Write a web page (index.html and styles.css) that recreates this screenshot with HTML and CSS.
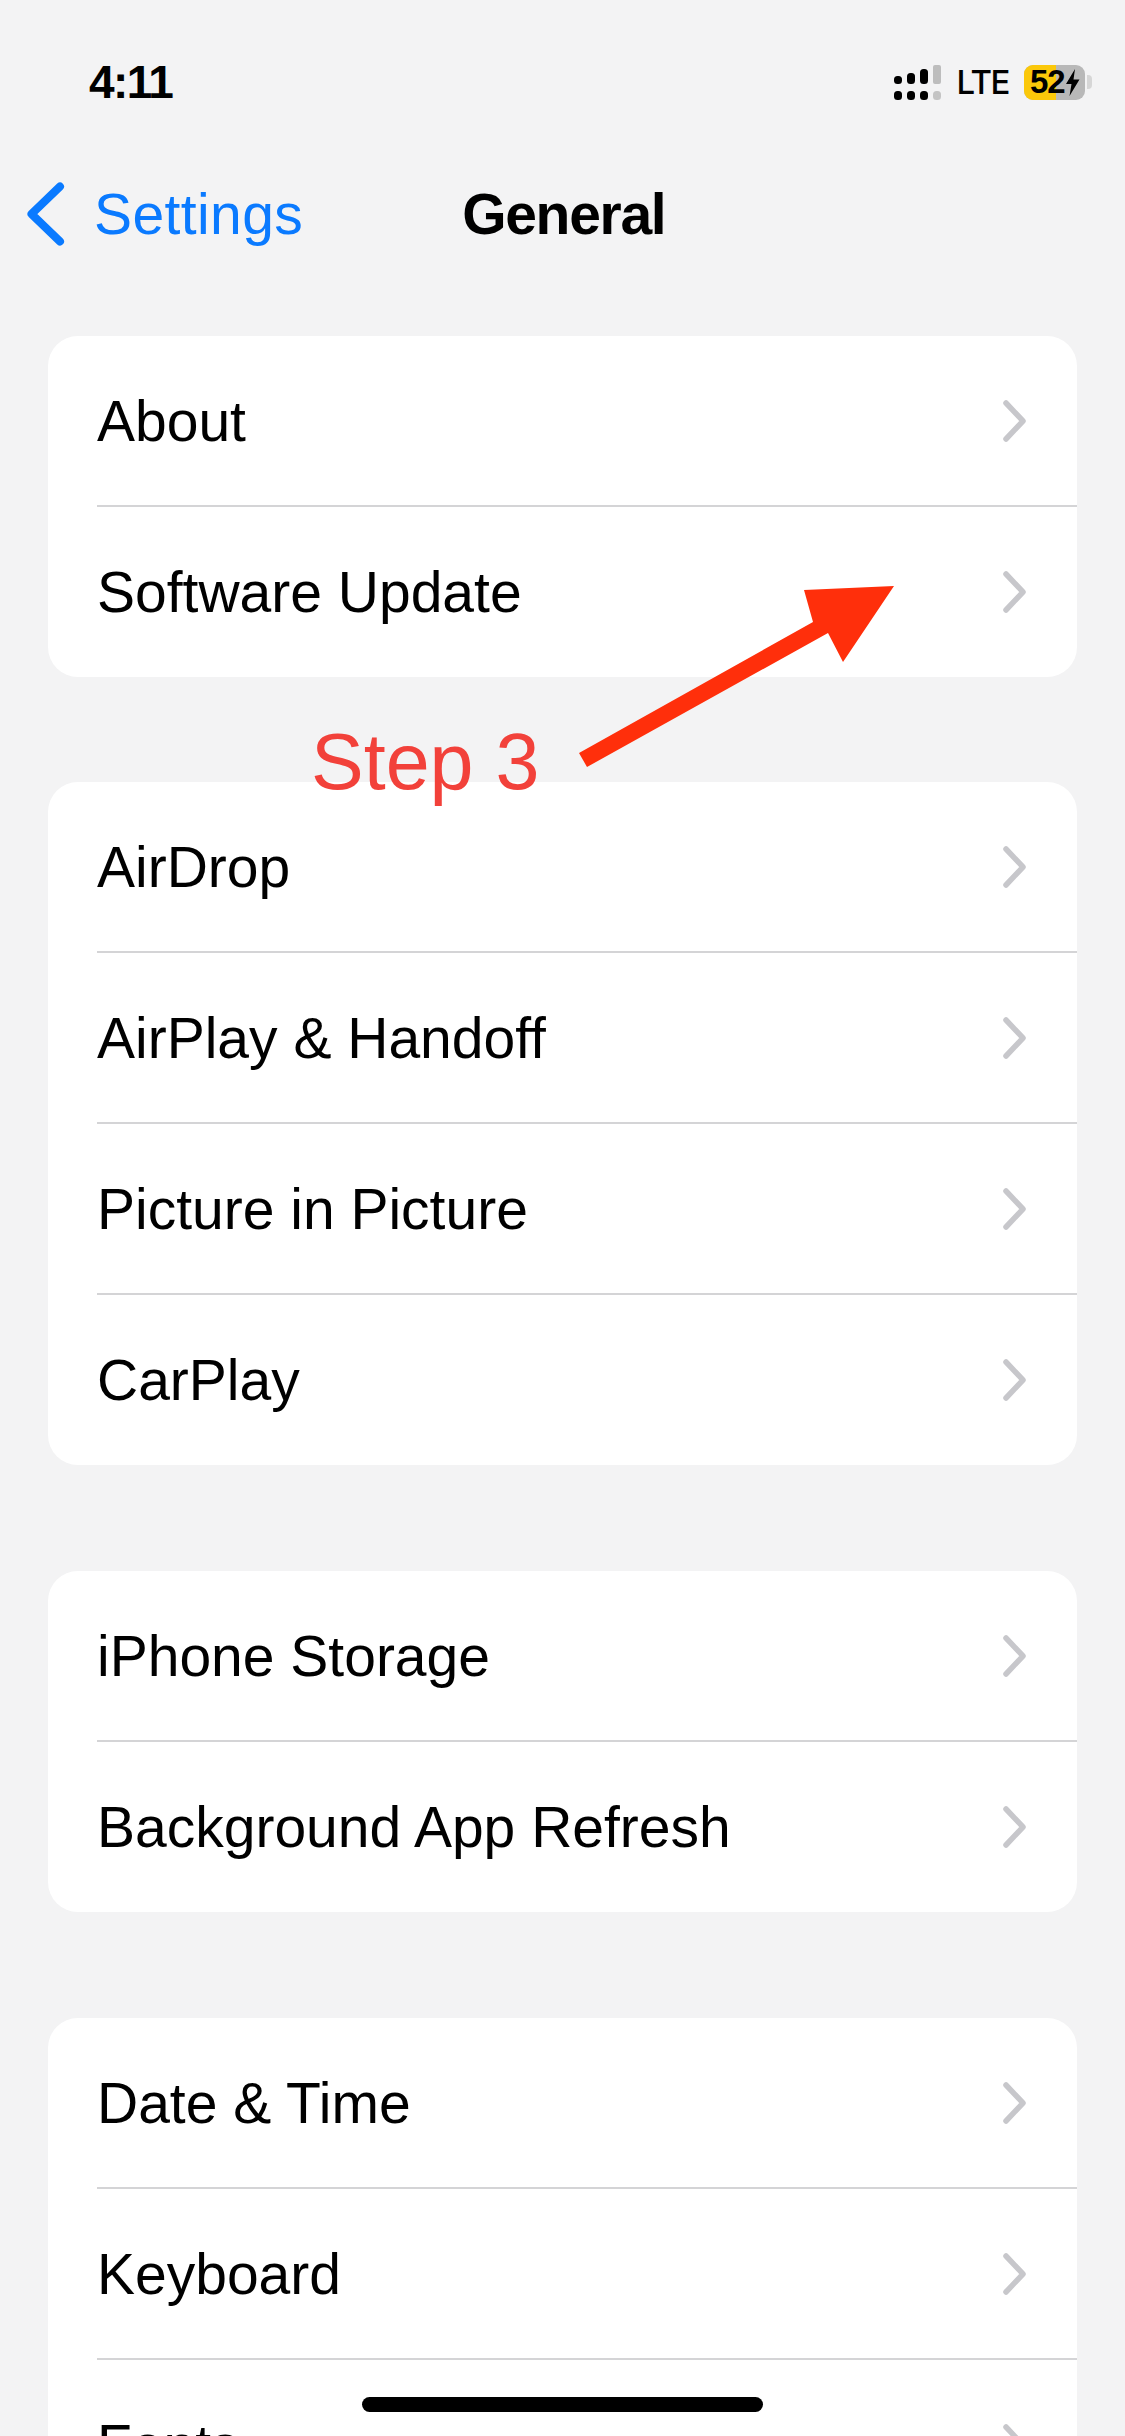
FILE: index.html
```html
<!DOCTYPE html>
<html lang="en">
<head>
    <meta charset="UTF-8">
    <meta name="viewport" content="width=device-width, initial-scale=1.0">
    <title>General</title>
    <link rel="stylesheet" href="styles.css">
</head>
<body>
    <div class="screen">
        <div class="status-bar">
            <span class="time">4:11</span>
            <div class="status-icons">
                <svg class="signal" width="47" height="35" viewBox="0 0 47 35">
                    <rect x="0" y="11" width="8" height="8" rx="3.5" fill="#000"/>
                    <rect x="13" y="8" width="8" height="11" rx="3.5" fill="#000"/>
                    <rect x="26" y="4" width="8" height="15" rx="3.5" fill="#000"/>
                    <rect x="39" y="0" width="8" height="19" rx="2" fill="#bdbdbd"/>
                    <rect x="0" y="26" width="8" height="9" rx="3.5" fill="#000"/>
                    <rect x="13" y="26" width="8" height="9" rx="3.5" fill="#000"/>
                    <rect x="26" y="26" width="8" height="9" rx="3.5" fill="#000"/>
                    <rect x="39" y="26" width="8" height="9" rx="3.5" fill="#c4c4c4"/>
                </svg>
                <span class="network">LTE</span>
                <div class="battery">
                    <div class="battery-body">
                        <div class="battery-fill"></div>
                        <span class="battery-level">52</span>
                        <svg class="bolt" width="15" height="27" viewBox="0 0 15 27">
                            <path d="M10 0 L1 15 H6.5 L4.5 27 L14.5 10.5 H8.5 Z" fill="#000"/>
                        </svg>
                    </div>
                    <div class="battery-nub"></div>
                </div>
            </div>
        </div>

        <div class="nav-bar">
            <div class="back">
                <svg width="38" height="64" viewBox="0 0 38 64">
                    <path d="M33 4.5 L4.5 32 L33 59.5" fill="none" stroke="#0a7aff" stroke-width="8" stroke-linecap="round" stroke-linejoin="round"/>
                </svg>
                <span>Settings</span>
            </div>
            <h1 class="nav-title">General</h1>
        </div>

        <div class="list">
            <div class="card">
                <div class="row"><span>About</span><svg class="chevron" viewBox="0 0 24 42"><path d="M3 3 L20 21 L3 39"/></svg></div>
                <div class="row"><span>Software Update</span><svg class="chevron" viewBox="0 0 24 42"><path d="M3 3 L20 21 L3 39"/></svg></div>
            </div>

            <div class="card">
                <div class="row"><span>AirDrop</span><svg class="chevron" viewBox="0 0 24 42"><path d="M3 3 L20 21 L3 39"/></svg></div>
                <div class="row"><span>AirPlay &amp; Handoff</span><svg class="chevron" viewBox="0 0 24 42"><path d="M3 3 L20 21 L3 39"/></svg></div>
                <div class="row"><span>Picture in Picture</span><svg class="chevron" viewBox="0 0 24 42"><path d="M3 3 L20 21 L3 39"/></svg></div>
                <div class="row"><span>CarPlay</span><svg class="chevron" viewBox="0 0 24 42"><path d="M3 3 L20 21 L3 39"/></svg></div>
            </div>

            <div class="card">
                <div class="row"><span>iPhone Storage</span><svg class="chevron" viewBox="0 0 24 42"><path d="M3 3 L20 21 L3 39"/></svg></div>
                <div class="row"><span>Background App Refresh</span><svg class="chevron" viewBox="0 0 24 42"><path d="M3 3 L20 21 L3 39"/></svg></div>
            </div>

            <div class="card">
                <div class="row"><span>Date &amp; Time</span><svg class="chevron" viewBox="0 0 24 42"><path d="M3 3 L20 21 L3 39"/></svg></div>
                <div class="row"><span>Keyboard</span><svg class="chevron" viewBox="0 0 24 42"><path d="M3 3 L20 21 L3 39"/></svg></div>
                <div class="row"><span>Fonts</span><svg class="chevron" viewBox="0 0 24 42"><path d="M3 3 L20 21 L3 39"/></svg></div>
            </div>
        </div>

        <!-- annotation drawn over the screenshot -->
        <span class="step-label">Step 3</span>
        <svg class="step-arrow" width="1125" height="2436" viewBox="0 0 1125 2436">
            <polygon points="579,753 813,622 804,590 894,586 843,662 828,633 587,767" fill="#ff2f0b"/>
        </svg>

        <div class="home-bar"></div>
    </div>
</body>
</html>
```

FILE: styles.css
```css
html, body {
    margin: 0;
    padding: 0;
}
body {
    font-family: "Liberation Sans", Arial, sans-serif;
    background-color: #f3f3f4;
}
.screen {
    position: relative;
    height: 2436px;
    overflow: hidden;
    background-color: #f3f3f4;
}
.status-bar {
    display: flex;
    justify-content: space-between;
    align-items: center;
    height: 64px;
    padding: 50px 33px 0 89px;
}
.time {
    font-size: 46px;
    font-weight: 700;
    letter-spacing: -1.6px;
    color: #000;
}
.status-icons {
    display: flex;
    align-items: center;
}
.signal {
    margin-right: 16px;
}
.network {
    font-family: Inter, "Liberation Sans", sans-serif;
    font-size: 33px;
    font-weight: 500;
    letter-spacing: -1.5px;
    color: #000;
    margin-right: 15px;
}
.battery {
    display: flex;
    align-items: center;
}
.battery-body {
    position: relative;
    display: flex;
    align-items: center;
    width: 61px;
    height: 35px;
    background: #b8b8b8;
    border-radius: 9px;
    overflow: hidden;
}
.battery-fill {
    position: absolute;
    left: 0;
    top: 0;
    bottom: 0;
    width: 32px;
    background: #fbc80a;
}
.battery-level {
    position: relative;
    margin-left: 6px;
    font-size: 33px;
    font-weight: 700;
    color: #000;
    letter-spacing: -1px;
}
.bolt {
    position: relative;
    margin-left: 0;
}
.battery-nub {
    width: 5px;
    height: 14px;
    margin-left: 2px;
    background: #d6d6d6;
    border-radius: 0 4px 4px 0;
}
.nav-bar {
    display: flex;
    align-items: center;
    height: 92px;
    margin-top: 54px;
    padding: 0 27px;
}
.back {
    display: flex;
    align-items: center;
    gap: 29px;
    color: #0a7aff;
    font-size: 57px;
    letter-spacing: 0.4px;
}
.nav-title {
    margin: 0 0 0 159px;
    font-size: 57px;
    font-weight: 700;
    letter-spacing: -1.3px;
    color: #000;
}
.list {
    padding-top: 76px;
}
.card {
    margin: 0 48px 106px;
    background: #fff;
    border-radius: 30px;
    overflow: hidden;
}
.card:first-child {
    margin-bottom: 105px;
}
.row {
    display: flex;
    justify-content: space-between;
    align-items: center;
    height: 169px;
    margin-left: 49px;
    padding-right: 50px;
    border-bottom: 2px solid #d4d4d6;
    font-size: 57px;
    color: #000;
}
.row:last-child {
    border-bottom: none;
    height: 170px;
}
.chevron {
    width: 24px;
    height: 42px;
    fill: none;
    stroke: #c7c7cb;
    stroke-width: 5.5;
    stroke-linecap: round;
    stroke-linejoin: round;
}
.step-label {
    position: absolute;
    left: 311px;
    top: 716px;
    font-size: 79px;
    color: #f2413a;
}
.step-arrow {
    position: absolute;
    left: 0;
    top: 0;
}
.home-bar {
    position: absolute;
    left: 362px;
    top: 2397px;
    width: 401px;
    height: 15px;
    background: #000;
    border-radius: 8px;
}
```
